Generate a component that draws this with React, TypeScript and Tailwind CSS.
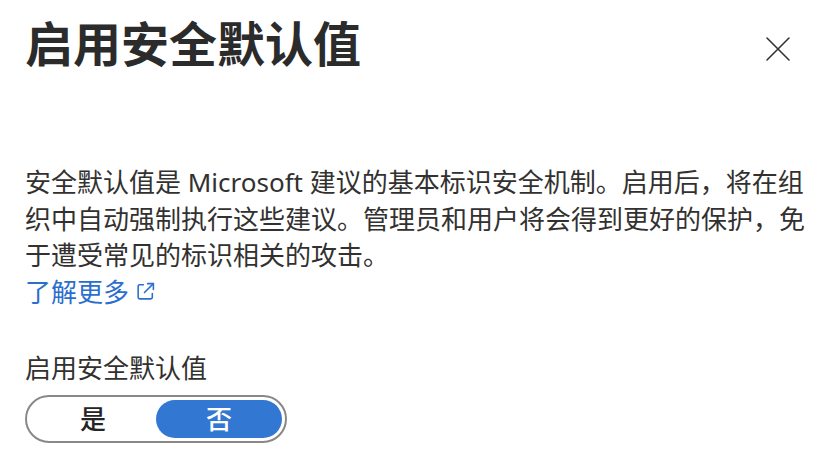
import { useState } from "react";

const font = "font-['Noto_Sans','Noto_Sans_CJK_SC',sans-serif]";

export default function App() {
  const [enabled, setEnabled] = useState(false);

  return (
    <div className={`w-[826px] h-[468px] bg-white text-[#323130] ${font} pl-[25px] pr-[16px]`}>
      <div className="flex items-start justify-between pt-[12px]">
        <h1 className="text-[48px] font-bold leading-[64px] text-[#2b2b2b]">启用安全默认值</h1>
        <button className="mt-[20px] mr-[15px] p-[4px] text-[#333]" aria-label="关闭">
          <svg width="26" height="26" viewBox="0 0 26 26" fill="none" stroke="currentColor" strokeWidth="1.6" strokeLinecap="round">
            <path d="M2 2 L24 24 M24 2 L2 24" />
          </svg>
        </button>
      </div>

      <div className="mt-[88px] w-[785px] text-[26px] leading-[36.5px]">
        <p>
          安全默认值是 Microsoft 建议的基本标识安全机制。启用后，将在组织中自动强制执行这些建议。管理员和用户将会得到更好的保护，免于遭受常见的标识相关的攻击。
        </p>
        <a href="#" className="inline-flex items-center gap-[6px] text-[#2b6fcc]">
          了解更多
          <svg width="21" height="21" viewBox="0 0 20 20" fill="none" stroke="currentColor" strokeWidth="1.5" strokeLinecap="round" strokeLinejoin="round">
            <path d="M8 3.5H4.5a1.5 1.5 0 0 0-1.5 1.5v10.5a1.5 1.5 0 0 0 1.5 1.5H15a1.5 1.5 0 0 0 1.5-1.5V12" />
            <path d="M12 2.5h5.5V8" />
            <path d="M17.5 2.5 9 11" />
          </svg>
        </a>
      </div>

      <div className="mt-[40px] text-[26px] leading-[36px]">启用安全默认值</div>
      <div className="mt-[9px] flex w-[262px] h-[48px] rounded-full border-2 border-[#8a8886] p-[3px]">
        <button
          onClick={() => setEnabled(true)}
          className={`flex-1 rounded-full text-[26px] font-medium leading-none ${enabled ? "bg-[#3277d2] text-white" : "text-[#252423]"}`}
        >
          是
        </button>
        <button
          onClick={() => setEnabled(false)}
          className={`flex-1 rounded-full text-[26px] font-medium leading-none ${!enabled ? "bg-[#3277d2] text-white" : "text-[#252423]"}`}
        >
          否
        </button>
      </div>
    </div>
  );
}
